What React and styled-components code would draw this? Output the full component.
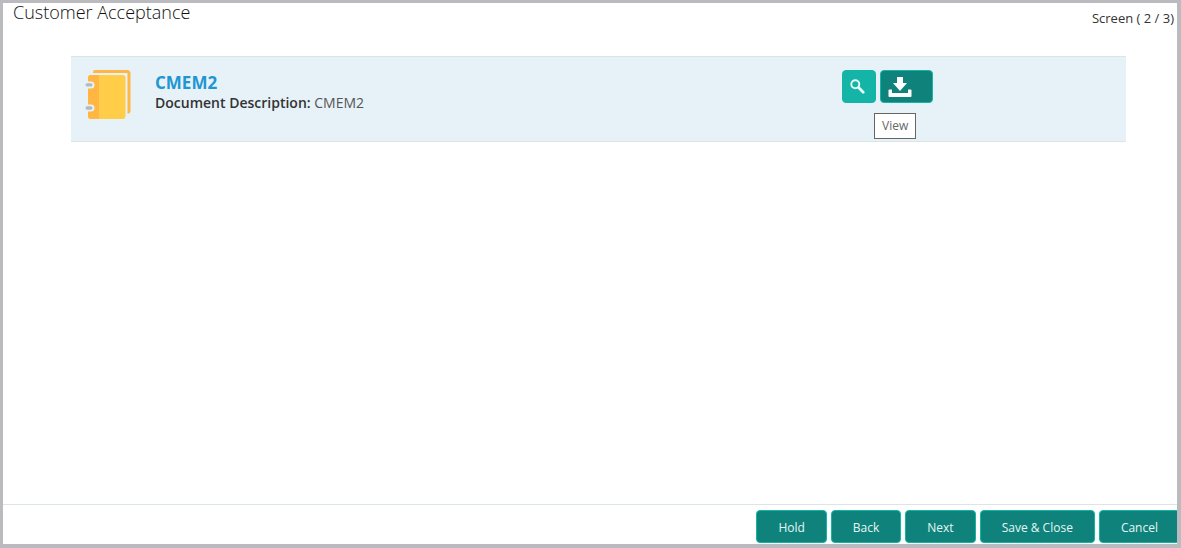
import styled, { createGlobalStyle } from 'styled-components';

const documents = [{ id: 1, name: 'CMEM2', description: 'CMEM2' }];

const actions = ['Hold', 'Back', 'Next', 'Save & Close', 'Cancel'];

const NotebookIcon = () => (
  <svg width="46" height="51" viewBox="0 0 46 51" aria-hidden="true">
    <path
      d="M8 3V2a2 2 0 0 1 2-2h32a3.500 3.500 0 0 1 3.500 3.500V41a2.500 2.500 0 0 1-3 2.500V3z"
      fill="#ffb643"
    />
    <rect x="3" y="5" width="37.500" height="44" rx="3" fill="#ffcd48" />
    <path d="M6 5h8v44H6a3 3 0 0 1-3-3V8a3 3 0 0 1 3-3z" fill="#ffb643" />
    <rect x="-2" y="11.500" width="11.500" height="7" rx="3.500" fill="#e7f2f8" />
    <rect x="-2" y="34.500" width="11.500" height="7" rx="3.500" fill="#e7f2f8" />
    <rect x="0.500" y="13.200" width="7" height="3.400" rx="1.700" fill="#aebbc1" />
    <rect x="0.500" y="36.300" width="7" height="3.400" rx="1.700" fill="#aebbc1" />
  </svg>
);

const SearchIcon = () => (
  <svg width="15" height="15" viewBox="0 0 15 15" fill="none" stroke="#e4fbf7" aria-hidden="true">
    <circle cx="5.300" cy="5.300" r="4" strokeWidth="1.900" />
    <path d="M8.600 8.600l4.600 4.600" strokeWidth="2.800" strokeLinecap="round" />
  </svg>
);

const DownloadIcon = () => (
  <svg width="24" height="20" viewBox="0 0 24 20" fill="#fff" aria-hidden="true">
    <path d="M9 0h6v6h4l-7 8-7-8h4z" />
    <path d="M1.500 12.500H4V16h16v-3.500h2.500a1 1 0 0 1 1 1V19a1 1 0 0 1-1 1h-21a1 1 0 0 1-1-1v-5.500a1 1 0 0 1 1-1z" />
  </svg>
);

const App = () => (
  <>
    <GlobalStyle />
    <Screen>
      <Header>
        <Title>Customer Acceptance</Title>
        <StepCount>Screen ( 2 / 3)</StepCount>
      </Header>
      <DocumentList>
        {documents.map((doc) => (
          <DocumentRow key={doc.id}>
            <NotebookIcon />
            <DocumentInfo>
              <DocumentName>{doc.name}</DocumentName>
              <Description>
                <b>Document Description:</b> {doc.description}
              </Description>
            </DocumentInfo>
            <RowActions>
              <ViewButton type="button" aria-label="View document">
                <SearchIcon />
              </ViewButton>
              <DownloadButton type="button" aria-label="Download document">
                <DownloadIcon />
              </DownloadButton>
              <Tooltip role="tooltip">View</Tooltip>
            </RowActions>
          </DocumentRow>
        ))}
      </DocumentList>
      <Footer>
        {actions.map((label) => (
          <ActionButton key={label} type="button">
            {label}
          </ActionButton>
        ))}
      </Footer>
    </Screen>
  </>
);

const GlobalStyle = createGlobalStyle`
  * {
    box-sizing: border-box;
  }
  body {
    margin: 0;
    background: #fff;
    color: #333;
    font-family: 'Open Sans', 'Noto Sans', sans-serif;
    font-size: 13px;
  }
`;

const Screen = styled.div`
  display: flex;
  flex-direction: column;
  min-height: 100vh;
  border: solid #bbbbbf;
  border-width: 3px 4px 4px 3px;
  overflow: hidden;
`;

const Header = styled.header`
  display: flex;
  justify-content: space-between;
  align-items: flex-start;
  padding: 0 3px 0 10px;
`;

const Title = styled.h1`
  margin: 0;
  font-size: 18px;
  font-weight: 300;
  line-height: 18px;
  color: #111;
`;

const StepCount = styled.span`
  padding-top: 6px;
  line-height: 18px;
`;

const DocumentList = styled.main`
  flex: 1;
  padding: 29px 51px 0 68px;
`;

const DocumentRow = styled.section`
  display: grid;
  grid-template-columns: 46px 1fr 284px;
  column-gap: 24px;
  align-items: start;
  min-height: 86px;
  padding: 13px 0 13px 14px;
  border: 1px solid #dbe5e8;
  border-width: 1px 0;
  background: #e7f2f8;
`;

const DocumentInfo = styled.div`
  padding-top: 2px;
`;

const DocumentName = styled.h2`
  margin: 0;
  font-size: 17px;
  font-weight: 700;
  line-height: 22px;
  color: #2196d3;
`;

const Description = styled.p`
  margin: 0;
  font-size: 14px;
  line-height: 18px;
  color: #555;

  b {
    font-weight: 600;
    color: #333;
  }
`;

const RowActions = styled.div`
  position: relative;
  display: flex;
  gap: 4px;
`;

const Button = styled.button`
  display: flex;
  align-items: center;
  height: 33px;
  padding: 0 21px;
  border: 1px solid #12b5a6;
  border-radius: 4px;
  background: #0e827b;
  color: #e6f7f5;
  font-family: inherit;
  font-size: 12px;
  white-space: nowrap;
  cursor: pointer;
`;

const ViewButton = styled(Button)`
  padding: 0 10px 0 7px;
  background: #14b4a6;
`;

const DownloadButton = styled(Button)`
  padding: 0 20px 0 7px;
`;

const Tooltip = styled.span`
  position: absolute;
  top: 43px;
  left: 32px;
  padding: 3px 7px;
  border: 1px solid #666;
  background: #fff;
  color: #666;
  font-size: 12px;
  line-height: 18px;
`;

const Footer = styled.footer`
  display: flex;
  justify-content: flex-end;
  gap: 4px;
  margin-right: -3px;
  padding: 5px 0 1px;
  border-top: 1px solid #dce6ea;
`;

const ActionButton = styled(Button)`
  flex-shrink: 0;
  padding-top: 2px;
`;

export default App;
